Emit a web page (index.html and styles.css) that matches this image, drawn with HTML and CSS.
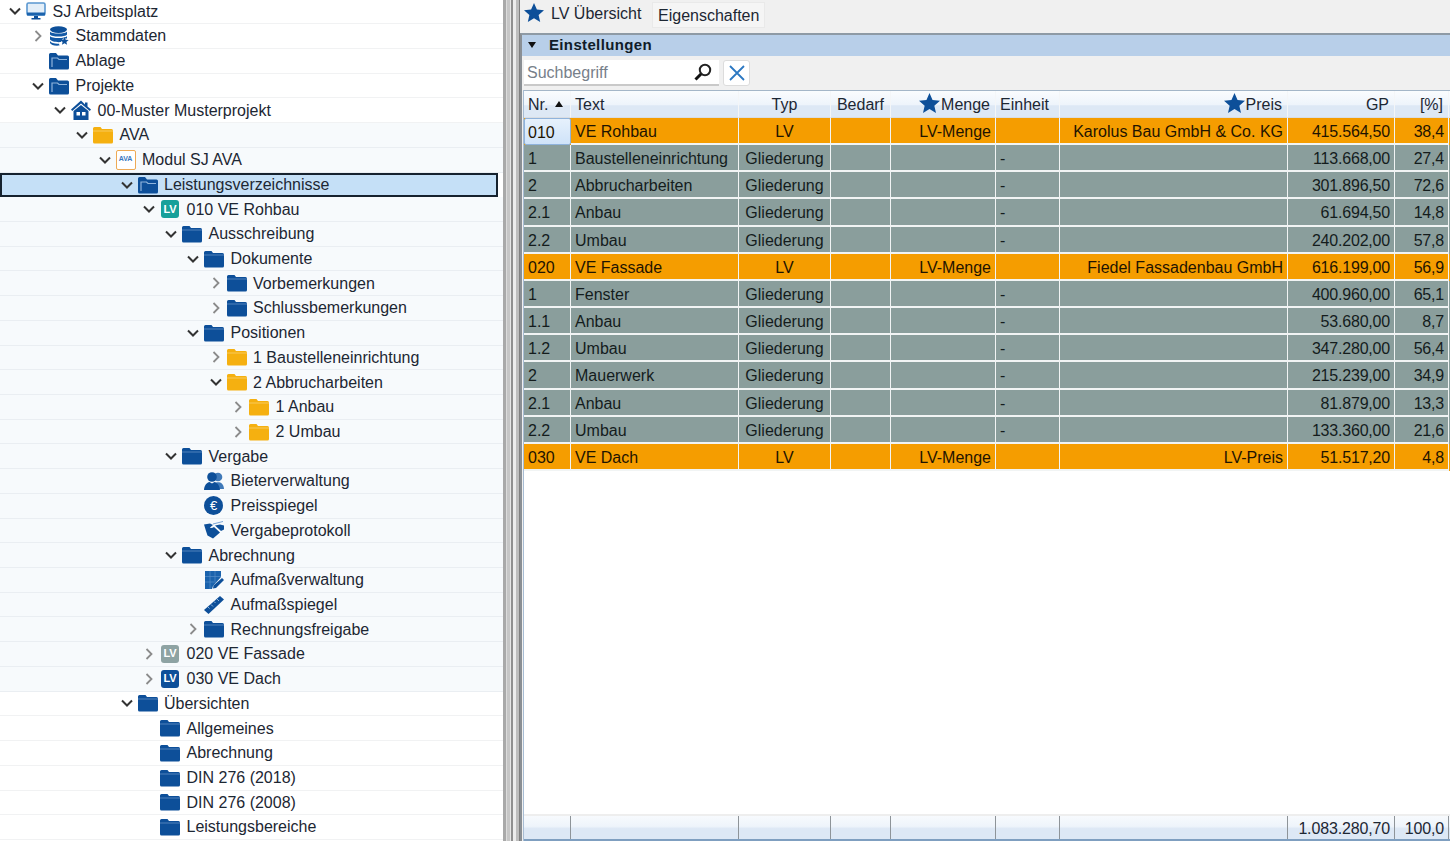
FILE: index.html
```html
<!DOCTYPE html>
<html lang="de">
<head>
<meta charset="utf-8">
<title>SJ Arbeitsplatz</title>
<link rel="stylesheet" href="styles.css">
</head>
<body>
<svg class="defs" width="0" height="0" aria-hidden="true">
  <symbol id="cd" viewBox="0 0 12 12"><path d="M1 3.5 6 8.5 11 3.5" fill="none" stroke="#333" stroke-width="2"/></symbol>
  <symbol id="cr" viewBox="0 0 12 12"><path d="M3.5 1 8.5 6 3.5 11" fill="none" stroke="#8b8b8b" stroke-width="1.8"/></symbol>
  <symbol id="monitor" viewBox="0 0 20 18"><rect x="1" y="1" width="18" height="12" rx="1.5" fill="#e3eef8" stroke="#5a97d0" stroke-width="1.6"/><rect x="1" y="10.5" width="18" height="3" fill="#1b63ad"/><path d="M8 14h4v2h2.5v1.5h-9V16H8z" fill="#0d4f99"/></symbol>
  <symbol id="db" viewBox="0 0 20 20"><ellipse cx="9.500" cy="3.600" rx="8.500" ry="3.400" fill="#0d4f99"/><path d="M1 5.500c1.500 2.800 15.500 2.800 17 0v3c-1.500 2.800-15.500 2.800-17 0zM1 10c1.500 2.800 15.500 2.800 17 0v2.500h-4l-2 3.500c-4 .5-10-.5-11-2.500zM1 15c1 2 5 3 9 2.700l.5 1.800c-5 .5-8.500-.5-9.500-2.500z" fill="#1359a6"/><path d="M15.500 11l1.200 2.700 3 .3-2.300 1.900.7 2.900-2.600-1.500-2.600 1.500.7-2.900-2.300-1.900 3-.3z" fill="#0d4f99"/></symbol>
  <symbol id="folder-a" viewBox="0 0 20 18"><path d="M0 2.500A1.500 1.500 0 0 1 1.500 1h5.500l2 2.500h9.500A1.500 1.500 0 0 1 20 5v11a1.500 1.500 0 0 1-1.500 1.500h-17A1.500 1.500 0 0 1 0 16z" fill="#0d4f99"/><path d="M3 15V6h5.500l1.500 1.500h8" fill="none" stroke="#8fb4dc" stroke-width="1.200"/></symbol>
  <symbol id="folder-b" viewBox="0 0 20 18"><path d="M0 2.500A1.500 1.500 0 0 1 1.500 1h6l1.500 2h9.500A1.500 1.500 0 0 1 20 4.500V16a1.500 1.500 0 0 1-1.500 1.500h-17A1.500 1.500 0 0 1 0 16z" fill="#0d4f99"/><path d="M0 5h20" stroke="#6f9acb" stroke-width=".7"/></symbol>
  <symbol id="folder-g" viewBox="0 0 20 18"><path d="M0 2.500A1.500 1.500 0 0 1 1.500 1h6l1.500 2h9.500A1.500 1.500 0 0 1 20 4.500V16a1.500 1.500 0 0 1-1.500 1.500h-17A1.500 1.500 0 0 1 0 16z" fill="#f5b010"/><path d="M0 5h20" stroke="#fbd77b" stroke-width=".7"/></symbol>
  <symbol id="house" viewBox="0 0 20 20"><path d="M10 .5 0 9.500 1.200 11 10 3.500 18.800 11 20 9.500 16.500 6.500V2.500h-2.500v2z" fill="#0d4f99"/><path d="M2.500 11 10 5l7.500 6V20h-15z" fill="#0d4f99"/><path d="M5.500 12h3.500v3.500h-3.500zM11 12h3.500v3.500h-3.500z" fill="#fff"/></symbol>
  <symbol id="people" viewBox="0 0 20 18"><circle cx="14" cy="5" r="4.300" fill="#3f79b8"/><path d="M12 10.500c4-.8 7.500.5 8 6.500h-5z" fill="#3f79b8"/><circle cx="8" cy="5" r="4.800" fill="#0d4f99"/><path d="M0 18c.3-5 3-7.500 5.500-8l2.500 1.500 2.500-1.500c2.500.5 5 3 5.500 8z" fill="#0d4f99"/></symbol>
  <symbol id="hands" viewBox="0 0 20 18"><path d="M0 3.500l6-1 3 1.500-3 2.500c1 1 2.500 .5 4-.5l6 5.500-7 6-5.500-3-1.500-4.500z" fill="#0d4f99"/><path d="M9 3l4-1 6-1.500" fill="none" stroke="#7aa4d4" stroke-width="1"/><path d="M11 4.500l5-1 4 1v4l-3 1.500z" fill="#0d4f99"/></symbol>
  <symbol id="measure" viewBox="0 0 20 18"><path d="M1 0h16v6l-8 9-1 3H1z" fill="#1b63ad"/><path d="M6 0v18M11 0v12M1 5.500h16M1 11h9" stroke="#5f93cc" stroke-width=".6"/><path d="M18 7l2 2-8 8-3 .5.500-3z" fill="#0d4f99"/></symbol>
  <symbol id="ruler" viewBox="0 0 20 18"><path d="M16 0 20 3.500 4.500 18 0 14z" fill="#0d4f99"/><path d="M4 11l1.500 1.500M7 8.500l2 2M10 5.500l1.500 1.500M13 3l2 2" stroke="#8fb4dc" stroke-width="1"/></symbol>
  <symbol id="star" viewBox="0 0 20 19"><path d="M10 0l2.900 6.600 7.100.7-5.400 4.700 1.600 7L10 15.300 3.800 19l1.600-7L0 7.300l7.100-.7z" fill="#0d4f99"/></symbol>
  <symbol id="lens" viewBox="0 0 18 18"><circle cx="11" cy="7" r="5.200" fill="none" stroke="#222" stroke-width="2"/><path d="M7 11 1.500 16.500" stroke="#111" stroke-width="3"/></symbol>
  <symbol id="close" viewBox="0 0 16 16"><path d="M1 1 15 15M15 1 1 15" stroke="#2b78c2" stroke-width="1.800"/></symbol>
</svg>

<div class="app">
  <nav class="tree">
    <div class="row l0"><svg class="chev"><use href="#cd"/></svg><svg class="ico"><use href="#monitor"/></svg><span>SJ Arbeitsplatz</span></div>
    <div class="row l1"><svg class="chev"><use href="#cr"/></svg><svg class="ico tall"><use href="#db"/></svg><span>Stammdaten</span></div>
    <div class="row l1"><i class="chev"></i><svg class="ico"><use href="#folder-a"/></svg><span>Ablage</span></div>
    <div class="row l1"><svg class="chev"><use href="#cd"/></svg><svg class="ico"><use href="#folder-a"/></svg><span>Projekte</span></div>
    <div class="row l2"><svg class="chev"><use href="#cd"/></svg><svg class="ico tall"><use href="#house"/></svg><span>00-Muster Musterprojekt</span></div>
    <div class="row l3 tint"><svg class="chev"><use href="#cd"/></svg><svg class="ico"><use href="#folder-g"/></svg><span>AVA</span></div>
    <div class="row l4 tint"><svg class="chev"><use href="#cd"/></svg><b class="ava">AVA</b><span>Modul SJ AVA</span></div>
    <div class="row l5 selected"><svg class="chev"><use href="#cd"/></svg><svg class="ico"><use href="#folder-a"/></svg><span>Leistungsverzeichnisse</span></div>
    <div class="row l6 tint"><svg class="chev"><use href="#cd"/></svg><b class="lv teal">LV</b><span>010 VE Rohbau</span></div>
    <div class="row l7 tint"><svg class="chev"><use href="#cd"/></svg><svg class="ico"><use href="#folder-b"/></svg><span>Ausschreibung</span></div>
    <div class="row l8 tint"><svg class="chev"><use href="#cd"/></svg><svg class="ico"><use href="#folder-b"/></svg><span>Dokumente</span></div>
    <div class="row l9 tint"><svg class="chev"><use href="#cr"/></svg><svg class="ico"><use href="#folder-b"/></svg><span>Vorbemerkungen</span></div>
    <div class="row l9 tint"><svg class="chev"><use href="#cr"/></svg><svg class="ico"><use href="#folder-b"/></svg><span>Schlussbemerkungen</span></div>
    <div class="row l8 tint"><svg class="chev"><use href="#cd"/></svg><svg class="ico"><use href="#folder-b"/></svg><span>Positionen</span></div>
    <div class="row l9 tint"><svg class="chev"><use href="#cr"/></svg><svg class="ico"><use href="#folder-g"/></svg><span>1 Baustelleneinrichtung</span></div>
    <div class="row l9 tint"><svg class="chev"><use href="#cd"/></svg><svg class="ico"><use href="#folder-g"/></svg><span>2 Abbrucharbeiten</span></div>
    <div class="row l10 tint"><svg class="chev"><use href="#cr"/></svg><svg class="ico"><use href="#folder-g"/></svg><span>1 Anbau</span></div>
    <div class="row l10 tint"><svg class="chev"><use href="#cr"/></svg><svg class="ico"><use href="#folder-g"/></svg><span>2 Umbau</span></div>
    <div class="row l7 tint"><svg class="chev"><use href="#cd"/></svg><svg class="ico"><use href="#folder-b"/></svg><span>Vergabe</span></div>
    <div class="row l8 tint"><i class="chev"></i><svg class="ico"><use href="#people"/></svg><span>Bieterverwaltung</span></div>
    <div class="row l8 tint"><i class="chev"></i><b class="euro">€</b><span>Preisspiegel</span></div>
    <div class="row l8 tint"><i class="chev"></i><svg class="ico"><use href="#hands"/></svg><span>Vergabeprotokoll</span></div>
    <div class="row l7 tint"><svg class="chev"><use href="#cd"/></svg><svg class="ico"><use href="#folder-b"/></svg><span>Abrechnung</span></div>
    <div class="row l8 tint"><i class="chev"></i><svg class="ico"><use href="#measure"/></svg><span>Aufmaßverwaltung</span></div>
    <div class="row l8 tint"><i class="chev"></i><svg class="ico"><use href="#ruler"/></svg><span>Aufmaßspiegel</span></div>
    <div class="row l8 tint"><svg class="chev"><use href="#cr"/></svg><svg class="ico"><use href="#folder-b"/></svg><span>Rechnungsfreigabe</span></div>
    <div class="row l6 tint"><svg class="chev"><use href="#cr"/></svg><b class="lv grey">LV</b><span>020 VE Fassade</span></div>
    <div class="row l6 tint"><svg class="chev"><use href="#cr"/></svg><b class="lv blue">LV</b><span>030 VE Dach</span></div>
    <div class="row l5"><svg class="chev"><use href="#cd"/></svg><svg class="ico"><use href="#folder-b"/></svg><span>Übersichten</span></div>
    <div class="row l6"><i class="chev"></i><svg class="ico"><use href="#folder-b"/></svg><span>Allgemeines</span></div>
    <div class="row l6"><i class="chev"></i><svg class="ico"><use href="#folder-b"/></svg><span>Abrechnung</span></div>
    <div class="row l6"><i class="chev"></i><svg class="ico"><use href="#folder-b"/></svg><span>DIN 276 (2018)</span></div>
    <div class="row l6"><i class="chev"></i><svg class="ico"><use href="#folder-b"/></svg><span>DIN 276 (2008)</span></div>
    <div class="row l6"><i class="chev"></i><svg class="ico"><use href="#folder-b"/></svg><span>Leistungsbereiche</span></div>
  </nav>

  <div class="splitter"></div>

  <main class="main">
    <div class="tabs">
      <div class="tab active"><svg class="tab-star"><use href="#star"/></svg><span>LV Übersicht</span></div>
      <div class="tab boxed">Eigenschaften</div>
    </div>
    <section class="panel">
      <div class="bar"><i class="bar-arrow"></i><strong>Einstellungen</strong></div>
      <div class="tools">
        <div class="search"><span>Suchbegriff</span><svg class="lens"><use href="#lens"/></svg></div>
        <button class="clear" type="button"><svg class="x"><use href="#close"/></svg></button>
      </div>
      <div class="grid">
        <div class="cols head">
          <div class="c sort">Nr.<i class="sort-arrow"></i></div>
          <div class="c">Text</div>
          <div class="c ctr">Typ</div>
          <div class="c ctr">Bedarf</div>
          <div class="c rt"><svg class="star"><use href="#star"/></svg>Menge</div>
          <div class="c">Einheit</div>
          <div class="c rt"><svg class="star"><use href="#star"/></svg>Preis</div>
          <div class="c rt">GP</div>
          <div class="c rt">[%]</div>
        </div>
        <div class="body">
          <div class="cols dr or"><div class="c focus">010</div><div class="c">VE Rohbau</div><div class="c ctr">LV</div><div class="c"></div><div class="c rt">LV-Menge</div><div class="c"></div><div class="c rt">Karolus Bau GmbH &amp; Co. KG</div><div class="c rt num">415.564,50</div><div class="c rt num">38,4</div></div>
          <div class="cols dr gr"><div class="c">1</div><div class="c">Baustelleneinrichtung</div><div class="c ctr">Gliederung</div><div class="c"></div><div class="c"></div><div class="c">-</div><div class="c"></div><div class="c rt num">113.668,00</div><div class="c rt num">27,4</div></div>
          <div class="cols dr gr"><div class="c">2</div><div class="c">Abbrucharbeiten</div><div class="c ctr">Gliederung</div><div class="c"></div><div class="c"></div><div class="c">-</div><div class="c"></div><div class="c rt num">301.896,50</div><div class="c rt num">72,6</div></div>
          <div class="cols dr gr"><div class="c">2.1</div><div class="c">Anbau</div><div class="c ctr">Gliederung</div><div class="c"></div><div class="c"></div><div class="c">-</div><div class="c"></div><div class="c rt num">61.694,50</div><div class="c rt num">14,8</div></div>
          <div class="cols dr gr"><div class="c">2.2</div><div class="c">Umbau</div><div class="c ctr">Gliederung</div><div class="c"></div><div class="c"></div><div class="c">-</div><div class="c"></div><div class="c rt num">240.202,00</div><div class="c rt num">57,8</div></div>
          <div class="cols dr or"><div class="c">020</div><div class="c">VE Fassade</div><div class="c ctr">LV</div><div class="c"></div><div class="c rt">LV-Menge</div><div class="c"></div><div class="c rt">Fiedel Fassadenbau GmbH</div><div class="c rt num">616.199,00</div><div class="c rt num">56,9</div></div>
          <div class="cols dr gr"><div class="c">1</div><div class="c">Fenster</div><div class="c ctr">Gliederung</div><div class="c"></div><div class="c"></div><div class="c">-</div><div class="c"></div><div class="c rt num">400.960,00</div><div class="c rt num">65,1</div></div>
          <div class="cols dr gr"><div class="c">1.1</div><div class="c">Anbau</div><div class="c ctr">Gliederung</div><div class="c"></div><div class="c"></div><div class="c">-</div><div class="c"></div><div class="c rt num">53.680,00</div><div class="c rt num">8,7</div></div>
          <div class="cols dr gr"><div class="c">1.2</div><div class="c">Umbau</div><div class="c ctr">Gliederung</div><div class="c"></div><div class="c"></div><div class="c">-</div><div class="c"></div><div class="c rt num">347.280,00</div><div class="c rt num">56,4</div></div>
          <div class="cols dr gr"><div class="c">2</div><div class="c">Mauerwerk</div><div class="c ctr">Gliederung</div><div class="c"></div><div class="c"></div><div class="c">-</div><div class="c"></div><div class="c rt num">215.239,00</div><div class="c rt num">34,9</div></div>
          <div class="cols dr gr"><div class="c">2.1</div><div class="c">Anbau</div><div class="c ctr">Gliederung</div><div class="c"></div><div class="c"></div><div class="c">-</div><div class="c"></div><div class="c rt num">81.879,00</div><div class="c rt num">13,3</div></div>
          <div class="cols dr gr"><div class="c">2.2</div><div class="c">Umbau</div><div class="c ctr">Gliederung</div><div class="c"></div><div class="c"></div><div class="c">-</div><div class="c"></div><div class="c rt num">133.360,00</div><div class="c rt num">21,6</div></div>
          <div class="cols dr or"><div class="c">030</div><div class="c">VE Dach</div><div class="c ctr">LV</div><div class="c"></div><div class="c rt">LV-Menge</div><div class="c"></div><div class="c rt">LV-Preis</div><div class="c rt num">51.517,20</div><div class="c rt num">4,8</div></div>
        </div>
        <div class="cols foot">
          <div class="c"></div><div class="c"></div><div class="c"></div><div class="c"></div><div class="c"></div><div class="c"></div><div class="c"></div><div class="c rt">1.083.280,70</div><div class="c rt">100,0</div>
        </div>
      </div>
    </section>
  </main>
</div>
</body>
</html>
```

FILE: styles.css
```css
* { box-sizing: border-box; }
html, body { margin: 0; height: 100%; overflow: hidden; background: #fff; }
body { font: 16px/1.2 "Liberation Sans", Arial, sans-serif; color: #1d2733; }
.defs { position: absolute; }
.app { display: flex; width: 1450px; height: 841px; overflow: hidden; }

/* Tree */
.tree { width: 503px; flex: none; margin-top: -.5px; overflow: hidden; }
.row { display: flex; align-items: center; height: 24.730px; border-bottom: 1px solid #f1f2f3; white-space: nowrap; }
.tint { background: #f7fafc; border-bottom-color: #eaeef2; }
.l0 { padding-left: 9px; }
.l1 { padding-left: 32px; }
.l2 { padding-left: 54px; }
.l3 { padding-left: 76px; }
.l4 { padding-left: 98.500px; }
.l5 { padding-left: 120.500px; }
.l6 { padding-left: 143px; }
.l7 { padding-left: 165px; }
.l8 { padding-left: 187px; }
.l9 { padding-left: 209.500px; }
.l10 { padding-left: 232px; }
.selected { background: #c5e0f7; margin-right: 5px; border: 2px solid #16222e; padding-left: 118.500px; }
.chev { width: 12px; height: 12px; flex: none; margin-right: 5px; display: block; }
.ico { width: 20px; height: 18px; flex: none; margin-right: 6.500px; }
.tall { height: 20px; }
.ava, .lv, .euro { flex: none; display: flex; align-items: center; justify-content: center; font-weight: 700; margin-right: 7.500px; }
.ava { width: 20px; height: 20px; border: 1.500px solid #eeaa55; background: #fff; border-radius: 2px; color: #3b78c0; font-size: 7px; margin-right: 6.500px; }
.lv { width: 18px; height: 18px; margin-left: 1px; border-radius: 3px; color: #fff; font-size: 11px; }
.teal { background: #17a09a; }
.grey { background: #8ea3a3; }
.blue { background: #0d4f99; }
.euro { width: 19px; height: 19px; border-radius: 50%; background: #0d4f99; color: #fff; font-size: 13px; font-weight: 400; }

/* Splitter */
.splitter {
  width: 17px; flex: none;
  background: linear-gradient(90deg, #a9a9a9 0 3px, #dcdcdc 3px 4px, #c6c6c6 4px 7px, #e6e6e6 7px 8px, #8f8f8f 8px 10px, #ececec 10px 13px, #bdbdbd 13px 16px, #808080 16px 17px);
}

/* Right */
.main { flex: 1; min-width: 0; display: flex; flex-direction: column; background: #f0f0f0; }
.tabs { height: 33px; flex: none; display: flex; padding-left: 4px; gap: 7px; }
.tab { display: flex; align-items: center; padding-top: 1px; }
.active { gap: 7px; height: 26px; width: 121px; }
.tab-star { width: 20px; height: 19px; flex: none; margin-top: -3px; }
.boxed { height: 26px; margin-top: 2px; padding: 2px 5px 0; background: #f5f5f5; border: 1px solid #e9e9e9; }
.panel { flex: 1; min-height: 0; display: flex; flex-direction: column; border-top: 2px solid #8e9aa5; border-left: 2px solid #8a8f94; }
.bar { height: 21px; flex: none; display: flex; align-items: center; background: #b8cfe9; padding: 0 0 2px 6px; color: #101c28; }
.bar strong { font-weight: 700; font-size: 15px; letter-spacing: .35px; margin-left: 13px; }
.bar-arrow { width: 0; height: 0; border: 4.500px solid transparent; border-top: 6px solid #111; border-bottom: 0; }
.tools { height: 34px; flex: none; display: flex; gap: 4px; padding: 4px 0 4px 2px; }
.search { width: 195px; display: flex; align-items: center; justify-content: space-between; padding: 0 7px 0 3px; background: #fff; border-bottom: 2px solid #c9c9c9; color: #77808a; }
.search span { padding-top: 2px; }
.lens { width: 18px; height: 18px; flex: none; }
.clear { width: 27px; padding: 0; display: flex; align-items: center; justify-content: center; background: #fff; border: 1px solid #dcdcdc; border-radius: 3px; }
.x { width: 16px; height: 16px; }
.grid { flex: 1; min-height: 0; display: flex; flex-direction: column; margin-left: 1px; border-left: 1px solid #a8bdd4; background: #fff; }
.cols { display: grid; grid-template-columns: 47px 168px 92px 60px 105px 64px 228px 107px 54px; flex: none; }
.c { display: flex; align-items: center; padding: 1px 4px 0; white-space: nowrap; overflow: hidden; }
.ctr { justify-content: center; }
.rt { justify-content: flex-end; }
.num { letter-spacing: -.2px; }

.head { height: 28px; border-top: 1px solid #a4b6c8; background: linear-gradient(#fafcfe, #eef4fb 50%, #dde8f5 55%, #dde8f5); }
.head .c { border-right: 1px solid #f4f6f8; border-bottom: 1px solid #d9dde2; padding-top: 2px; }
.head .rt { padding-right: 5px; }
.sort { justify-content: space-between; padding-right: 7px; }
.sort-arrow { width: 0; height: 0; border: 4px solid transparent; border-bottom: 6px solid #111; border-top: 0; margin-top: -3px; }
.star { width: 21px; height: 20px; flex: none; margin: -4px 1px 0 0; }

.body { flex: 1; min-height: 0; }
.dr { height: 27.170px; }
.dr .c { border-right: 1px solid #f1f4f4; border-bottom: 2px solid #f1f4f4; padding-top: 2px; }
.or { background: #f59d00; color: #1f1400; }
.gr { background: #8a9e9c; color: #141c1c; }
.dr .c.focus { background: linear-gradient(#e6f1fc, #cfe3f9); border: 1px solid #8fb3dc; border-radius: 2px; padding-left: 3px; }

.foot { height: 27px; background: linear-gradient(#f7fafd, #eef4fb 45%, #dde8f5 55%, #dde8f5); border-top: 2px solid #eeeeee; border-bottom: 2px solid #7f9fc0; }
.foot .c { border-right: 1px solid #8e9499; padding-top: 3px; }
.foot .rt { letter-spacing: -.15px; }
```
